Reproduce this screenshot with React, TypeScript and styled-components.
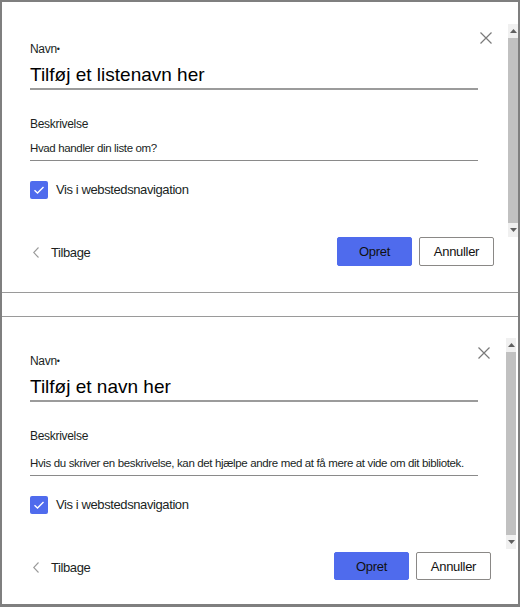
import styled, { createGlobalStyle } from 'styled-components'

const GlobalStyle = createGlobalStyle`
  html, body {
    margin: 0;
    padding: 0;
    background: #ffffff;
  }
  body {
    font-family: 'Liberation Sans', Arial, sans-serif;
    color: #201f1e;
    letter-spacing: -0.3px;
  }
  * {
    box-sizing: border-box;
  }
`

const Frame = styled.div`
  width: 520px;
  height: 607px;
  border-left: 2px solid #7f7f7f;
  border-right: 2px solid #7f7f7f;
  border-top: 2px solid #7f7f7f;
  border-bottom: 3px solid #7f7f7f;
  display: flex;
  flex-direction: column;
`

const Gap = styled.div`
  height: 23px;
  flex: none;
`

const PanelBox = styled.section<{ $height: number; $edge: 'top' | 'bottom'; $scrollRight: number }>`
  height: ${({ $height }) => $height}px;
  flex: none;
  display: grid;
  grid-template-columns: 1fr 10px;
  padding-right: ${({ $scrollRight }) => $scrollRight}px;
  ${({ $edge }) =>
    $edge === 'top' ? 'border-bottom: 1px solid #9a9a9a;' : 'border-top: 1px solid #9a9a9a;'}
`

const Main = styled.div<{ $padTop: number }>`
  position: relative;
  padding: ${({ $padTop }) => $padTop}px 0 0 28px;
  display: flex;
  flex-direction: column;
`

const CloseButton = styled.button`
  position: absolute;
  top: 30px;
  right: 16px;
  width: 12px;
  height: 12px;
  padding: 0;
  border: 0;
  background: none;
  display: flex;
`

const Label = styled.div`
  font-size: 12px;
  line-height: 16px;
  color: #201f1e;
  display: flex;
  align-items: center;
`

const Required = styled.span`
  font-size: 9px;
  line-height: 16px;
  margin-left: 0;
`

const TitleInput = styled.div`
  width: 448px;
  margin-top: 5px;
  font-size: 19px;
  letter-spacing: 0;
  line-height: 26px;
  color: #000;
  border-bottom: 2px solid #9b9b9b;
`

const DescLabel = styled(Label)`
  margin-top: 26px;
`

const DescInput = styled.div<{ $gap: number }>`
  width: 448px;
  margin-top: ${({ $gap }) => $gap}px;
  font-size: 11.5px;
  letter-spacing: -0.36px;
  line-height: 16px;
  padding-bottom: 4px;
  color: #201f1e;
  white-space: nowrap;
  border-bottom: 1px solid #8a8a8a;
`

const CheckRow = styled.label`
  margin-top: 20px;
  display: flex;
  align-items: center;
  gap: 8px;
  font-size: 13px;
  letter-spacing: -0.4px;
  line-height: 18px;
`

const CheckBox = styled.span`
  width: 18px;
  height: 18px;
  border-radius: 2px;
  background: #4f6bed;
  display: flex;
  align-items: center;
  justify-content: center;
`

const Footer = styled.div<{ $width: number; $h: number }>`
  width: ${({ $width }) => $width}px;
  height: ${({ $h }) => $h}px;
  margin-top: 38px;
  display: flex;
  align-items: center;
  justify-content: space-between;
`

const BackLink = styled.a`
  display: flex;
  align-items: center;
  gap: 12px;
  padding-left: 3px;
  padding-top: 2px;
  font-size: 13px;
  letter-spacing: -0.4px;
  color: #201f1e;
  text-decoration: none;
`

const Buttons = styled.div`
  display: flex;
  gap: 7px;
  height: 100%;
`

const Button = styled.button<{ $primary?: boolean }>`
  width: 75px;
  height: 100%;
  border-radius: 2px;
  font-family: 'Liberation Sans', Arial, sans-serif;
  font-size: 13px;
  letter-spacing: -0.3px;
  color: #111;
  background: ${({ $primary }) => ($primary ? '#4f6bed' : '#ffffff')};
  border: 1px solid ${({ $primary }) => ($primary ? '#4f6bed' : '#8a8886')};
  padding: 0;
`

const Track = styled.div<{ $top: number; $height: number }>`
  margin-top: ${({ $top }) => $top}px;
  height: ${({ $height }) => $height}px;
  width: 10px;
  background: #f0f0f0;
  display: flex;
  flex-direction: column;
`

const Arrow = styled.div`
  height: 14px;
  flex: none;
  display: flex;
  align-items: center;
  justify-content: center;
`

const Thumb = styled.div`
  flex: 1;
  background: #c1c1c1;
`

const ScrollBar = ({ top, height }: { top: number; height: number }) => (
  <Track $top={top} $height={height}>
    <Arrow>
      <svg width="7" height="4" viewBox="0 0 7 4">
        <path d="M0 4 L3.5 0 L7 4 Z" fill="#606060" />
      </svg>
    </Arrow>
    <Thumb />
    <Arrow>
      <svg width="7" height="4" viewBox="0 0 7 4">
        <path d="M0 0 L3.5 4 L7 0 Z" fill="#606060" />
      </svg>
    </Arrow>
  </Track>
)

interface IPanelProps {
  title: string
  description: string
  edge: 'top' | 'bottom'
  height: number
  padTop: number
  descGap: number
  footerWidth: number
  buttonHeight: number
  scrollTop: number
  scrollHeight: number
  scrollRight: number
}

const Panel = (p: IPanelProps) => (
  <PanelBox $height={p.height} $edge={p.edge} $scrollRight={p.scrollRight}>
    <Main $padTop={p.padTop}>
      <CloseButton aria-label="Luk">
        <svg width="12" height="12" viewBox="0 0 12 12">
          <path d="M0.5 0.5 L11.5 11.5 M11.5 0.5 L0.5 11.5" stroke="#7a7a7a" strokeWidth="1.2" />
        </svg>
      </CloseButton>
      <Label>
        Navn<Required>•</Required>
      </Label>
      <TitleInput>{p.title}</TitleInput>
      <DescLabel>Beskrivelse</DescLabel>
      <DescInput $gap={p.descGap}>{p.description}</DescInput>
      <CheckRow>
        <CheckBox>
          <svg width="12" height="10" viewBox="0 0 12 10">
            <path d="M1.5 5.2 L4.5 8 L10.5 2" stroke="#fff" strokeWidth="1.4" fill="none" />
          </svg>
        </CheckBox>
        Vis i webstedsnavigation
      </CheckRow>
      <Footer $width={p.footerWidth} $h={p.buttonHeight}>
        <BackLink href="#">
          <svg width="6" height="11" viewBox="0 0 6 11">
            <path d="M5.5 0.5 L0.7 5.5 L5.5 10.5" stroke="#9a9a9a" strokeWidth="1.1" fill="none" />
          </svg>
          Tilbage
        </BackLink>
        <Buttons>
          <Button $primary>Opret</Button>
          <Button>Annuller</Button>
        </Buttons>
      </Footer>
    </Main>
    <ScrollBar top={p.scrollTop} height={p.scrollHeight} />
  </PanelBox>
)

export default function App() {
  return (
    <>
      <GlobalStyle />
      <Frame>
        <Panel
          edge="top"
          height={291}
          padTop={39}
          title="Tilføj et listenavn her"
          description="Hvad handler din liste om?"
          descGap={8}
          footerWidth={464}
          buttonHeight={29}
          scrollTop={22}
          scrollHeight={213}
          scrollRight={0}
        />
        <Gap />
        <Panel
          edge="bottom"
          height={288}
          padTop={36}
          title="Tilføj et navn her"
          description="Hvis du skriver en beskrivelse, kan det hjælpe andre med at få mere at vide om dit bibliotek."
          descGap={11}
          footerWidth={461}
          buttonHeight={28}
          scrollTop={21}
          scrollHeight={211}
          scrollRight={2}
        />
      </Frame>
    </>
  )
}
